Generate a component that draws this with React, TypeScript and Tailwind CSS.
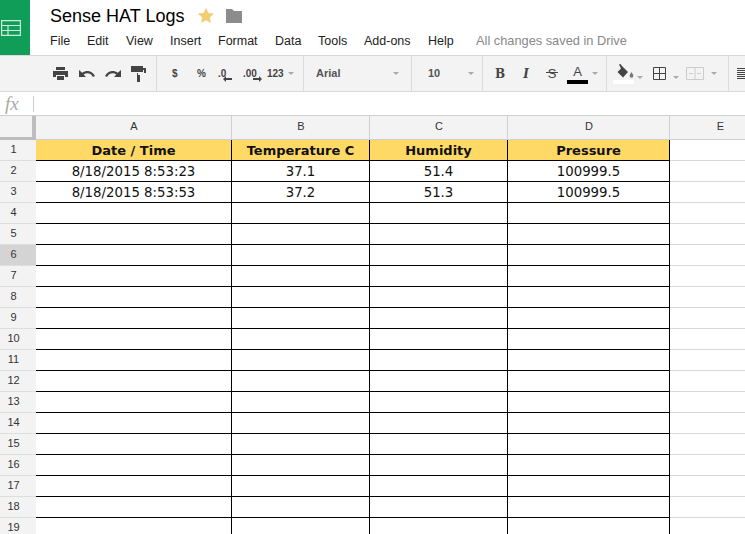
import React from 'react'

const MENUS = [
  { label: 'File', width: 'w-[37px]' },
  { label: 'Edit', width: 'w-[39px]' },
  { label: 'View', width: 'w-[44px]' },
  { label: 'Insert', width: 'w-[48px]' },
  { label: 'Format', width: 'w-[57px]' },
  { label: 'Data', width: 'w-[43px]' },
  { label: 'Tools', width: 'w-[46px]' },
  { label: 'Add-ons', width: 'w-[64px]' },
  { label: 'Help', width: 'w-[48px]' },
]

const ROWS: Record<number, string[]> = {
  1: ['Date / Time', 'Temperature C', 'Humidity', 'Pressure'],
  2: ['8/18/2015 8:53:23', '37.1', '51.4', '100999.5'],
  3: ['8/18/2015 8:53:53', '37.2', '51.3', '100999.5'],
}

const ROW_NUMBERS = Array.from({ length: 19 }, (_, i) => i + 1)

function Caret() {
  return (
    <span className="inline-block h-0 w-0 shrink-0 border-x-[3px] border-t-[3px] border-x-transparent border-t-[#aaa]" />
  )
}

function Divider() {
  return <div className="h-[36px] w-px shrink-0 bg-[#dcdcdc]" />
}

function Toolbar() {
  return (
    <div className="flex h-[37px] items-center border-y border-[#d9d9d9] bg-[#f3f3f3] font-['Liberation_Sans',sans-serif] text-[#444]">
      <div className="flex w-[156px] shrink-0 items-center pl-[53px]">
        <svg width="15" height="13" viewBox="0 0 15 13" fill="#444" className="mr-[11px]">
          <path d="M3 0h9v3H3zM0 4h15v6h-3V8H3v2H0zM4 9h7v4H4z" />
        </svg>
        <svg width="16" height="9" viewBox="0 0 16 9" fill="#444" className="mr-[10px]">
          <path d="M0 1v7h7L4.600 5.600C7.500 3.600 11.500 3.800 14 8l2-1C13 1.500 7.500 .8 3.200 3.800z" />
        </svg>
        <svg width="16" height="9" viewBox="0 0 16 9" fill="#444" className="mr-[10px]">
          <path d="M16 1v7H9l2.400-2.400C8.500 3.600 4.500 3.800 2 8L0 7C3 1.500 8.500 .8 12.800 3.800z" />
        </svg>
        <svg width="15" height="16" viewBox="0 0 15 16" fill="#444">
          <path d="M0 0h12v2h3v5H7v2h2v7H6V7h7V4h-1v2H0z" />
        </svg>
      </div>
      <Divider />
      <div className="flex w-[146px] shrink-0 items-center text-[10px] font-bold">
        <span className="ml-[15px] w-[25px]">$</span>
        <span className="w-[21px]">%</span>
        <span className="relative w-[25px]">
          .0
          <svg width="9" height="6" viewBox="0 0 9 6" fill="#444" className="absolute left-[5px] top-[10px]">
            <path d="M3 0v2h6v2H3v2L0 3z" />
          </svg>
        </span>
        <span className="relative w-[24px]">
          .00
          <svg width="9" height="6" viewBox="0 0 9 6" fill="#444" className="absolute left-[10px] top-[10px]">
            <path d="M6 0v2H0v2h6v2l3-3z" />
          </svg>
        </span>
        <span className="mr-[4px] font-bold">123</span>
        <Caret />
      </div>
      <Divider />
      <div className="flex w-[107px] shrink-0 items-center justify-between pl-[12px] pr-[12px] text-[11px] font-bold text-[#555]">
        <span>Arial</span>
        <Caret />
      </div>
      <Divider />
      <div className="flex w-[70px] shrink-0 items-center justify-between pl-[16px] pr-[8px] text-[11px] font-bold text-[#555]">
        <span>10</span>
        <Caret />
      </div>
      <Divider />
      <div className="flex w-[123px] shrink-0 items-center text-[#444]">
        <span className="ml-[4px] w-[26px] text-center font-['DejaVu_Serif',serif] text-[12px] font-bold">B</span>
        <span className="w-[26px] text-center font-['DejaVu_Serif',serif] text-[12px] font-bold italic">I</span>
        <span className="relative mr-[2px] w-[26px] text-center text-[13px]">
          S
          <span className="absolute left-[7px] top-[8px] h-px w-[12px] bg-[#444]" />
        </span>
        <span className="mr-[4px] flex w-[21px] flex-col items-center pt-[2px] text-[13px] leading-[12px]">
          A
          <span className="mt-[2px] h-[4px] w-[21px] bg-black" />
        </span>
        <Caret />
      </div>
      <Divider />
      <div className="flex w-[121px] shrink-0 items-center pl-[6px]">
        <span className="mr-[3px] flex w-[21px] flex-col items-center">
          <svg width="17" height="15" viewBox="0 0 17 15" fill="#444" className="ml-[3px]">
            <path d="M2 .5L3.500 0l1.500 2 6 6-5 5.500L.5 8 4 4.500z" />
            <path d="M14.500 8c1 1.700 1.900 2.800 1.900 3.800a1.900 1.900 0 0 1-3.800 0c0-1 .9-2.100 1.900-3.800z" fill="#777" />
          </svg>
          <span className="mt-[1px] h-[4px] w-[21px] bg-white" />
        </span>
        <span className="mr-[10px]">
          <Caret />
        </span>
        <svg width="13" height="13" viewBox="0 0 13 13" fill="none" stroke="#444" className="mr-[7px]">
          <path d="M.5.500h12v12H.5zM6.500.500v12M.5 6.500h12" />
        </svg>
        <span className="mr-[7px]">
          <Caret />
        </span>
        <svg width="18" height="13" viewBox="0 0 18 13" fill="none" stroke="#ccc" className="mr-[7px]">
          <path d="M.5.500h17v12H.5zM9 .5v12M3 6.500h4M11 6.500h4" />
        </svg>
        <Caret />
      </div>
      <Divider />
      <svg width="8" height="11" viewBox="0 0 8 11" stroke="#444" className="ml-[8px]">
        <path d="M0 .5h8M0 2.500h8M0 4.500h8M0 6.500h8M0 8.500h8M0 10.500h8" />
      </svg>
    </div>
  )
}

function Sheet() {
  const cols = ['A', 'B', 'C', 'D', 'E']
  return (
    <div className="grid grid-cols-[36px_196px_138px_138px_162px_101px] grid-rows-[24px_repeat(19,21px)] font-['DejaVu_Sans',sans-serif] text-[#111]">
      <div className="border-r-[4px] border-b-[3px] border-r-[#bdbdbd] border-b-[#bdbdbd] bg-[#f3f3f3]" />
      {cols.map((c) => (
        <div
          key={c}
          className="flex items-center justify-center border-r border-b border-[#d0d0d0] bg-[#f3f3f3] pb-[2px] pl-[1px] font-['Liberation_Sans',sans-serif] text-[11px] text-[#333]"
        >
          {c}
        </div>
      ))}
      {ROW_NUMBERS.map((n) => (
        <React.Fragment key={n}>
          <div
            className={`flex items-start justify-center border-b border-[#dedede] pt-[2px] pr-[9px] font-['Liberation_Sans',sans-serif] text-[11px] leading-[14px] text-[#333] ${
              n === 6 ? 'bg-[#d4d4d4]' : 'bg-[#f3f3f3]'
            }`}
          >
            {n}
          </div>
          {[0, 1, 2, 3].map((i) => (
            <div
              key={i}
              className={`flex items-center justify-center border-r border-b border-black pt-[2px] ${
                n === 1 ? 'bg-[#ffd966] text-[13px] font-bold' : 'bg-white text-[13.300px]'
              }`}
            >
              {ROWS[n]?.[i]}
            </div>
          ))}
          <div className="border-b border-[#d8d8d8] bg-white" />
        </React.Fragment>
      ))}
    </div>
  )
}

export default function App() {
  return (
    <div className="h-[534px] w-[745px] overflow-hidden bg-white font-['Liberation_Sans',sans-serif]">
      <div className="flex h-[55px]">
        <div className="flex h-[55px] w-[30px] shrink-0 items-center bg-[#0f9d58] pl-[1px]">
          <svg width="20" height="16" viewBox="0 0 20 16" fill="none" stroke="#cdebdc" strokeWidth="1.200">
            <path d="M.6.600h18.800v14.800H.6zM.6 5.500h18.800M.6 10.500h18.800M7 5.500v10" />
          </svg>
        </div>
        <div className="min-w-0 flex-1 pl-[20px]">
          <div className="flex h-[30px] items-center pt-[1px]">
            <span className="text-[18px] leading-none text-black">Sense HAT Logs</span>
            <svg width="18" height="17" viewBox="0 0 24 24" fill="#f1cd74" className="ml-[13px]">
              <path d="M12 1l3.400 7.400 7.900.9-5.900 5.400 1.700 8L12 18.600l-7.100 4.100 1.700-8L.7 9.300l7.900-.9z" />
            </svg>
            <svg width="16" height="14" viewBox="0 0 16 14" fill="#8c8c8c" className="ml-[11px]">
              <path d="M0 0h6l2 2h8v12H0z" />
            </svg>
          </div>
          <div className="flex h-[22px] items-center text-[12.500px] text-[#222]">
            {MENUS.map((m) => (
              <span key={m.label} className={`${m.width} shrink-0`}>
                {m.label}
              </span>
            ))}
            <span className="text-[12.800px] text-[#888]">All changes saved in Drive</span>
          </div>
        </div>
      </div>
      <Toolbar />
      <div className="flex h-[23px] items-center">
        <span className="ml-[5px] w-[28px] font-['Liberation_Serif',serif] text-[19px] italic leading-none text-[#aaa]">
          fx
        </span>
        <div className="h-[16px] w-px bg-[#ccc]" />
      </div>
      <div className="border-t border-[#d0d0d0]">
        <Sheet />
      </div>
    </div>
  )
}
